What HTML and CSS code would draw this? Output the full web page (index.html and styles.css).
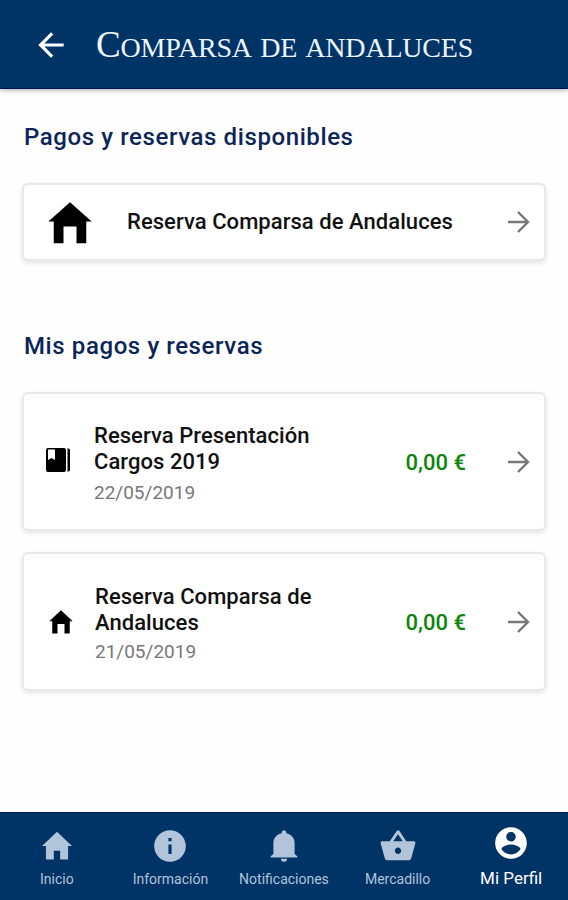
FILE: index.html
```html
<!DOCTYPE html>
<html lang="es">
<head>
<meta charset="UTF-8">
<meta name="viewport" content="width=device-width, initial-scale=1.0">
<title>Comparsa de Andaluces</title>
<link rel="stylesheet" href="styles.css">
</head>
<body>

<!-- Shared icons -->
<svg class="sprite" xmlns="http://www.w3.org/2000/svg">
  <symbol id="home" viewBox="0 0 24 24" preserveAspectRatio="none">
    <path d="M9 20v-7h6v7h4.500v-9H22L12 3 2 11h2.500v9z"/>
  </symbol>
  <symbol id="arrow" viewBox="0 0 22 22">
    <path d="M0 11h20M10 1l10 10-10 10" fill="none" stroke="currentColor" stroke-width="2.4"/>
  </symbol>
</svg>

<div class="app">
  <header class="header">
    <svg class="back" viewBox="0 0 24 24"><path d="M20 11H7.83l5.59-5.59L12 4l-8 8 8 8 1.41-1.41L7.83 13H20v-2z"/></svg>
    <h1 class="title"><span class="initial">C</span>OMPARSA DE ANDALUCES</h1>
  </header>

  <main class="content">
    <h2>Pagos y reservas disponibles</h2>
    <a class="card available">
      <svg class="icon-big"><use href="#home"/></svg>
      <span class="name">Reserva Comparsa de Andaluces</span>
      <svg class="arrow"><use href="#arrow"/></svg>
    </a>

    <h2 class="mine">Mis pagos y reservas</h2>
    <a class="card booking">
      <svg class="icon-book" viewBox="0 0 24 24">
        <path fill-rule="evenodd" d="M2 0h16a2 2 0 0 1 2 2v20a2 2 0 0 1-2 2H2a2 2 0 0 1-2-2V2a2 2 0 0 1 2-2zM2 1.500v10.500l3.500-2 3.500 2V1.500z"/>
        <path d="M21.500 0.200q2.500 0 2.500 2v19.600q0 2-2.500 2z"/>
      </svg>
      <div class="info">
        <div class="name">Reserva Presentación Cargos 2019</div>
        <div class="date">22/05/2019</div>
      </div>
      <span class="price">0,00 €</span>
      <svg class="arrow"><use href="#arrow"/></svg>
    </a>
    <a class="card booking second">
      <svg class="icon-small"><use href="#home"/></svg>
      <div class="info">
        <div class="name">Reserva Comparsa de Andaluces</div>
        <div class="date">21/05/2019</div>
      </div>
      <span class="price">0,00 €</span>
      <svg class="arrow"><use href="#arrow"/></svg>
    </a>
  </main>

  <nav class="tabs">
    <a class="tab">
      <svg viewBox="0 0 24 24"><path d="M10 20.500V15h4v5.500h5V12h2.500L12 3l-9.500 9H5v8.500z"/></svg>
      <span>Inicio</span>
    </a>
    <a class="tab">
      <svg viewBox="0 0 24 24"><path d="M12 2C6.480 2 2 6.480 2 12s4.480 10 10 10 10-4.480 10-10S17.520 2 12 2zm1 15h-2v-6h2v6zm0-8h-2V7h2v2z"/></svg>
      <span>Información</span>
    </a>
    <a class="tab">
      <svg viewBox="0 0 24 24"><path d="M12 22c1.100 0 2-.9 2-2h-4c0 1.100.89 2 2 2zM18.700 17V10c0-3-2-5.400-5.200-6.100C13.500 2.700 12.900 2 12 2s-1.500.7-1.500 1.900C7.300 4.600 5.300 7 5.300 10v7l-1.700 1.500v.8h16.800v-.8z"/></svg>
      <span>Notificaciones</span>
    </a>
    <a class="tab">
      <svg viewBox="0 0 24 24"><path d="M17.210 9l-4.380-6.560c-.19-.28-.51-.42-.83-.42-.32 0-.64.14-.83.430L6.790 9H2c-.55 0-1 .45-1 1 0 .09.010.18.040.270l2.540 9.270c.23.840 1 1.460 1.920 1.460h13c.92 0 1.690-.62 1.930-1.460l2.540-9.270L23 10c0-.55-.45-1-1-1h-4.790zM9 9l3-4.400L15 9H9zm3 8c-1.100 0-2-.9-2-2s.9-2 2-2 2 .9 2 2-.9 2-2 2z"/></svg>
      <span>Mercadillo</span>
    </a>
    <a class="tab active">
      <svg viewBox="0 0 24 24"><path d="M12 2C6.480 2 2 6.480 2 12s4.480 10 10 10 10-4.480 10-10S17.520 2 12 2zm0 3c1.660 0 3 1.340 3 3s-1.340 3-3 3-3-1.340-3-3 1.340-3 3-3zm0 14.200c-2.500 0-4.710-1.280-6-3.220.03-1.990 4-3.080 6-3.080 1.990 0 5.970 1.090 6 3.080-1.290 1.940-3.500 3.220-6 3.220z"/></svg>
      <span>Mi Perfil</span>
    </a>
  </nav>
</div>

</body>
</html>
```
FILE: styles.css
```css
* {
  box-sizing: border-box;
}
body {
  margin: 0;
  font-family: Roboto, sans-serif;
  background-color: #fefefe;
  color: #111;
}
.sprite {
  display: none;
}
.app {
  display: flex;
  flex-direction: column;
  height: 900px;
}

/* Header */
.header {
  display: flex;
  align-items: center;
  height: 89px;
  padding: 2px 0 0 32px;
  background-color: #003366;
  border-bottom: 1px solid #00145a;
  box-shadow: 0 1px 5px rgba(0, 0, 0, 0.35);
  color: #fff;
}
.back {
  width: 38px;
  height: 38px;
  fill: #fff;
}
.title {
  margin: 3px 0 0 26px;
  font-family: "Liberation Serif", serif;
  font-size: 28px;
  line-height: 40px;
  font-weight: normal;
  letter-spacing: -0.2px;
  word-spacing: 3px;
  white-space: nowrap;
  color: #eef5ff;
}
.initial {
  font-size: 37px;
}

/* Content */
.content {
  flex: 1;
  padding: 33px 22px 0;
}
h2 {
  margin: 0 0 31px 2px;
  font-size: 24px;
  line-height: 30px;
  font-weight: 500;
  letter-spacing: 0.6px;
  color: #0b2558;
}
h2.mine {
  margin-top: 70px;
}
.card {
  display: flex;
  align-items: center;
  border: 2px solid #e8e8e8;
  border-radius: 6px;
  background-color: #fff;
  box-shadow: 0 2px 5px rgba(0, 0, 0, 0.1);
}
.available {
  height: 78px;
  padding: 0 14px 0 20px;
}
.booking {
  height: 139px;
  margin-bottom: 21px;
  padding: 0 14px 0 22px;
}
.icon-big {
  width: 52px;
  height: 58px;
  margin: 3px 31px 0 0;
}
.icon-book {
  width: 24px;
  height: 24px;
  margin: -4px 24px 0 0;
}
.icon-small {
  width: 28px;
  height: 33px;
  margin: 2px 20px 0 1px;
}
.name {
  font-size: 22px;
  line-height: 26px;
  font-weight: 500;
  letter-spacing: 0.05px;
}
.info {
  width: 240px;
  padding-top: 5px;
}
.date {
  margin-top: 5px;
  font-size: 19px;
  line-height: 26px;
  color: #777;
}
.second .info {
  padding-top: 6px;
}
.second .date {
  margin-top: 3px;
}
.price {
  margin-left: auto;
  margin-right: 42px;
  padding-top: 1px;
  font-size: 22px;
  font-weight: 500;
  color: #0a860a;
}
.arrow {
  width: 22px;
  height: 22px;
  color: #777;
}
.available .arrow {
  margin-left: auto;
}

/* Bottom tabs */
.tabs {
  display: flex;
  height: 88px;
  background-color: #003366;
  border-top: 1px solid #00145a;
}
.tab {
  flex: 1;
  display: flex;
  flex-direction: column;
  align-items: center;
  padding-top: 14px;
  font-size: 14px;
  line-height: 18px;
  color: #b1c4d9;
}
.tab svg {
  width: 38px;
  height: 38px;
  margin-bottom: 5px;
  fill: currentColor;
}
.tab.active {
  padding-top: 11px;
  font-size: 17px;
  line-height: 22px;
  color: #fff;
}
```
